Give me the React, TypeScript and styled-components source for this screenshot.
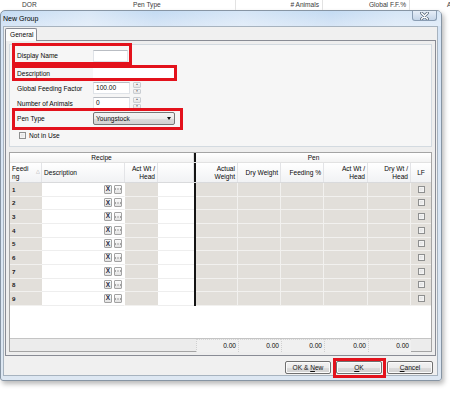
import { createGlobalStyle, styled } from "styled-components";

const FONT = `"Liberation Sans", Arial, sans-serif`;
const COLS = "32px 83px 33px 36px 2px 42px 43px 43px 44px 43px 20px";

type Align = "left" | "right" | "center";
type HeadDef = { lines: string[]; align: Align; sort?: boolean };

const recipeHeads: HeadDef[] = [
  { lines: ["Feedi", "ng"], align: "left", sort: true },
  { lines: ["Description"], align: "left" },
  { lines: ["Act Wt /", "Head"], align: "right" },
  { lines: [], align: "left" },
];

const penHeads: HeadDef[] = [
  { lines: ["Actual", "Weight"], align: "right" },
  { lines: ["Dry Weight"], align: "right" },
  { lines: ["Feeding %"], align: "right" },
  { lines: ["Act Wt /", "Head"], align: "right" },
  { lines: ["Dry Wt /", "Head"], align: "right" },
  { lines: ["LF"], align: "center" },
];

const rows = Array.from({ length: 9 }, (_, i) => i + 1);
const penCols = [0, 1, 2, 3, 4];

const flexAlign = (a: Align) =>
  a === "left" ? "flex-start" : a === "right" ? "flex-end" : "center";

export default function App() {
  return (
    <Page>
      <GlobalStyle />
      <ListHeader>
        <ListCol $pad={22}>DOR</ListCol>
        <ListCol $pad={3} $divider>
          Pen Type
        </ListCol>
        <ListCol $align="right" $divider>
          # Animals
        </ListCol>
        <ListCol $align="right" $divider>
          Global F.F.%
        </ListCol>
        <ListCol $pad={37}>A</ListCol>
      </ListHeader>

      <Dialog>
        <TitleBar>
          <Title>New Group</Title>
          <CloseButton>
            <svg width="9" height="8" viewBox="0 0 9 8">
              <path d="M1.5 1 L7.5 7 M7.5 1 L1.5 7" stroke="#5b6b7d" strokeWidth="3" strokeLinecap="round" />
              <path d="M1.5 1 L7.5 7 M7.5 1 L1.5 7" stroke="#ffffff" strokeWidth="1.5" strokeLinecap="round" />
            </svg>
          </CloseButton>
        </TitleBar>

        <Client>
          <TabStrip>
            <Tab>General</Tab>
          </TabStrip>
          <TabPanel>
            <GroupBox>
              <FormRow $top={4} $h={13}>
                <FieldLabel>Display Name</FieldLabel>
                <TextBox $w={35} />
              </FormRow>
              <FormRow $top={5} $h={12}>
                <FieldLabel>Description</FieldLabel>
                <TextBox $w={82} $plain />
              </FormRow>
              <FormRow $top={3} $h={12}>
                <FieldLabel>Global Feeding Factor</FieldLabel>
                <TextBox $w={37}>100.00</TextBox>
                <Spinner>
                  <SpinHalf>▲</SpinHalf>
                  <SpinHalf>▼</SpinHalf>
                </Spinner>
              </FormRow>
              <FormRow $top={3} $h={12}>
                <FieldLabel>Number of Animals</FieldLabel>
                <TextBox $w={37}>0</TextBox>
                <Spinner>
                  <SpinHalf>▲</SpinHalf>
                  <SpinHalf>▼</SpinHalf>
                </Spinner>
              </FormRow>
              <FormRow $top={2} $h={14}>
                <FieldLabel>Pen Type</FieldLabel>
                <Select>
                  <span>Youngstock</span>
                  <Caret />
                </Select>
              </FormRow>
              <FormRow $top={6} $h={9}>
                <CheckBox $left={2} />
                <CheckLabel>Not in Use</CheckLabel>
              </FormRow>

              <Highlight $x={2} $y={-2} $w={120} $h={22} />
              <Highlight $x={2} $y={20} $w={165} $h={16} />
              <Highlight $x={2} $y={63} $w={171} $h={22} />
            </GroupBox>

            <Table>
              <BandRow>
                <BandCell $span="1 / 5">Recipe</BandCell>
                <DividerCell />
                <BandCell $span="6 / 12" $last>
                  Pen
                </BandCell>
              </BandRow>

              <HeadRow>
                {recipeHeads.map((h, i) => (
                  <HeadCell key={`r${i}`} $align={h.align}>
                    {h.lines.map((l) => (
                      <span key={l}>{l}</span>
                    ))}
                    {h.sort && <SortMark>△</SortMark>}
                  </HeadCell>
                ))}
                <DividerCell />
                {penHeads.map((h, i) => (
                  <HeadCell key={`p${i}`} $align={h.align} $last={i === penHeads.length - 1}>
                    {h.lines.map((l) => (
                      <span key={l}>{l}</span>
                    ))}
                  </HeadCell>
                ))}
              </HeadRow>

              {rows.map((n) => (
                <DataRow key={n}>
                  <Cell $tone="gray" $noRight>
                    <RowNum>{n}</RowNum>
                  </Cell>
                  <Cell $tone="white" $align="right">
                    <MiniButton $bold>X</MiniButton>
                    <MiniButton>
                      <svg width="6" height="2" viewBox="0 0 6 2">
                        <rect x="0" y="0.5" width="1" height="1" fill="#5a5a5a" />
                        <rect x="2.5" y="0.5" width="1" height="1" fill="#5a5a5a" />
                        <rect x="5" y="0.5" width="1" height="1" fill="#5a5a5a" />
                      </svg>
                    </MiniButton>
                  </Cell>
                  <Cell $tone="gray" $noRight />
                  <Cell $tone="white" $noRight />
                  <DividerCell />
                  {penCols.map((c) => (
                    <Cell key={c} $tone="gray" />
                  ))}
                  <Cell $tone="gray" $align="center" $noRight>
                    <CheckBox />
                  </Cell>
                </DataRow>
              ))}

              <Filler />

              <FooterRow>
                <FootCell $span="1 / 6" />
                {penCols.map((c) => (
                  <TotalCell key={c}>0.00</TotalCell>
                ))}
                <FootCell />
              </FooterRow>
            </Table>
          </TabPanel>

          <ButtonBar>
            <DlgButton>
              OK &amp; <u>N</u>ew
            </DlgButton>
            <DlgButton $marked>
              <u>O</u>K
            </DlgButton>
            <DlgButton>
              <u>C</u>ancel
            </DlgButton>
          </ButtonBar>
        </Client>
      </Dialog>
    </Page>
  );
}

const GlobalStyle = createGlobalStyle`
  html, body { margin: 0; padding: 0; background: #ffffff; }
  body { font-family: ${FONT}; font-size: 6.6px; color: #0a0a0a; }
  * { box-sizing: border-box; }
`;

const Page = styled.div`
  width: 450px;
  height: 397px;
  overflow: hidden;
  background: #ffffff;
`;

const ListHeader = styled.div`
  display: grid;
  grid-template-columns: 130px 106px 87px 87px 40px;
  height: 10px;
  color: #3a3a3a;
`;

const ListCol = styled.div<{ $align?: Align; $pad?: number; $divider?: boolean }>`
  text-align: ${(p) => p.$align ?? "left"};
  padding: 0 3px 0 ${(p) => p.$pad ?? 0}px;
  line-height: 9px;
  white-space: nowrap;
  border-right: ${(p) => (p.$divider ? "1px solid #e2e2e2" : "none")};
`;

const Dialog = styled.div`
  width: 442px;
  height: 371px;
  border: 1px solid #8795a4;
  border-radius: 5px 5px 3px 3px;
  background: linear-gradient(180deg, #c4dbf3 0px, #d6e5f6 14px, #dde7f2 100%);
  box-shadow: 2px 3px 5px rgba(0, 0, 0, 0.28);
  display: flex;
  flex-direction: column;
`;

const TitleBar = styled.div`
  height: 15px;
  display: flex;
  align-items: flex-start;
  justify-content: space-between;
  padding-left: 2px;
  background: linear-gradient(
    90deg,
    rgba(255, 255, 255, 0) 0%,
    rgba(255, 255, 255, 0.35) 20%,
    rgba(255, 255, 255, 0) 35%,
    rgba(255, 255, 255, 0.3) 55%,
    rgba(255, 255, 255, 0) 75%,
    rgba(255, 255, 255, 0.3) 90%
  );
`;

const Title = styled.div`
  font-size: 7px;
  color: #000000;
  line-height: 14px;
  padding-top: 1px;
`;

const CloseButton = styled.div`
  width: 25px;
  height: 10px;
  margin-right: 4px;
  border: 1px solid #8a9db3;
  border-top: none;
  border-radius: 0 0 3px 3px;
  background: linear-gradient(180deg, #e6eef8, #c5d5e8);
  display: flex;
  align-items: center;
  justify-content: center;
`;

const Client = styled.div`
  height: 350px;
  margin: 0 3px 0 2px;
  background: #f0f0f0;
  border: 1px solid #a7b3bf;
  padding: 1px 0 0 1px;
  display: flex;
  flex-direction: column;
`;

const TabStrip = styled.div`
  display: flex;
  height: 12px;
  position: relative;
  z-index: 1;
`;

const Tab = styled.div`
  width: 32px;
  height: 13px;
  background: #fcfcfc;
  border: 1px solid #898c95;
  border-bottom: none;
  border-radius: 2px 2px 0 0;
  padding-left: 4px;
  line-height: 11px;
`;

const TabPanel = styled.div`
  width: 431px;
  height: 316px;
  border: 1px solid #898c95;
  background: #eeeeee;
  padding: 3px 3px;
  display: flex;
  flex-direction: column;
  gap: 5px;
`;

const GroupBox = styled.div`
  position: relative;
  height: 103px;
  border: 1px solid #d3dae0;
  background: #f6f6f6;
  padding-left: 7px;
`;

const FormRow = styled.div<{ $top: number; $h: number }>`
  display: flex;
  align-items: center;
  margin-top: ${(p) => p.$top}px;
  height: ${(p) => p.$h}px;
`;

const FieldLabel = styled.div`
  width: 76px;
  white-space: nowrap;
`;

const TextBox = styled.div<{ $w: number; $plain?: boolean }>`
  width: ${(p) => p.$w}px;
  height: 12px;
  background: #ffffff;
  border: 1px solid ${(p) => (p.$plain ? "#ffffff" : "#dfe3e8")};
  border-top-color: ${(p) => (p.$plain ? "#ffffff" : "#b9bdc3")};
  padding-left: 2px;
  line-height: 10px;
`;

const Spinner = styled.div`
  margin-left: 3px;
  width: 8px;
  height: 12px;
  display: flex;
  flex-direction: column;
  gap: 1px;
`;

const SpinHalf = styled.div`
  flex: 1;
  border: 1px solid #c9cdd2;
  border-radius: 1px;
  background: linear-gradient(180deg, #f8f8f8, #e4e4e4);
  font-size: 3px;
  color: #6b6b6b;
  display: flex;
  align-items: center;
  justify-content: center;
  line-height: 1;
`;

const Select = styled.div`
  width: 82px;
  height: 13px;
  border: 1px solid #767676;
  border-radius: 2px;
  background: linear-gradient(180deg, #f4f4f4 0%, #ececec 50%, #dcdcdc 51%, #d2d2d2 100%);
  display: flex;
  align-items: center;
  justify-content: space-between;
  padding: 0 3px 0 2px;
  color: #111111;
`;

const Caret = styled.div`
  width: 0;
  height: 0;
  border-left: 2.5px solid transparent;
  border-right: 2.5px solid transparent;
  border-top: 3px solid #111111;
`;

const CheckBox = styled.div<{ $left?: number }>`
  width: 7px;
  height: 7px;
  margin-left: ${(p) => p.$left ?? 0}px;
  border: 1px solid #8e8f8f;
  background: linear-gradient(135deg, #dcdcdc, #f6f6f6);
  box-shadow: inset 0 0 0 1px #f3f3f3;
`;

const CheckLabel = styled.div`
  margin-left: 3px;
`;

const Highlight = styled.div<{ $x: number; $y: number; $w: number; $h: number }>`
  position: absolute;
  left: ${(p) => p.$x}px;
  top: ${(p) => p.$y}px;
  width: ${(p) => p.$w}px;
  height: ${(p) => p.$h}px;
  border: 3px solid #e3121c;
  pointer-events: none;
`;

const Table = styled.div`
  height: 200px;
  border: 1px solid #a4a4a4;
  background: #ffffff;
  display: flex;
  flex-direction: column;
`;

const GridRow = styled.div`
  display: grid;
  grid-template-columns: ${COLS};
`;

const BandRow = styled(GridRow)`
  height: 10px;
  background: linear-gradient(180deg, #ffffff, #f3f3f3);
  border-bottom: 1px solid #e2e2e2;
`;

const BandCell = styled.div<{ $span: string; $last?: boolean }>`
  grid-column: ${(p) => p.$span};
  text-align: center;
  line-height: 9px;
  border-right: ${(p) => (p.$last ? "none" : "1px solid #e0e0e0")};
`;

const DividerCell = styled.div`
  background: #141414;
`;

const HeadRow = styled(GridRow)`
  height: 20px;
  background: linear-gradient(180deg, #ffffff, #f1f2f4);
  border-bottom: 1px solid #d9dadc;
`;

const HeadCell = styled.div<{ $align: Align; $last?: boolean }>`
  position: relative;
  display: flex;
  flex-direction: column;
  justify-content: center;
  align-items: ${(p) => flexAlign(p.$align)};
  text-align: ${(p) => p.$align};
  padding: 0 2px;
  line-height: 8px;
  white-space: nowrap;
  border-right: ${(p) => (p.$last ? "none" : "1px solid #e3e4e7")};
`;

const SortMark = styled.span`
  position: absolute;
  right: 1px;
  top: 4px;
  font-size: 5px;
  color: #9a9a9a;
`;

const DataRow = styled(GridRow)`
  height: 13.67px;
`;

const Cell = styled.div<{ $tone: "gray" | "white"; $noRight?: boolean; $align?: Align }>`
  background: ${(p) => (p.$tone === "gray" ? "#e2dfda" : "#ffffff")};
  border-bottom: 1px solid ${(p) => (p.$tone === "gray" ? "#f2f1ef" : "#eeeeee")};
  border-right: ${(p) => (p.$noRight ? "none" : `1px solid ${p.$tone === "gray" ? "#f2f1ef" : "#ffffff"}`)};
  display: flex;
  align-items: center;
  justify-content: ${(p) => flexAlign(p.$align ?? "left")};
  gap: 2px;
  padding: 0 2px;
`;

const RowNum = styled.span`
  color: #1a1a1a;
  font-weight: bold;
  font-size: 6.2px;
`;

const MiniButton = styled.div<{ $bold?: boolean }>`
  width: 8px;
  height: 9px;
  border: 1px solid #a2a2a2;
  border-radius: 1px;
  background: linear-gradient(180deg, #fbfbfb, #e2e2e2);
  display: flex;
  align-items: center;
  justify-content: center;
  font-size: 6.5px;
  font-weight: ${(p) => (p.$bold ? "bold" : "normal")};
  color: #1f2a44;
  line-height: 1;
`;

const Filler = styled.div`
  flex: 1;
  background: #ffffff;
`;

const FooterRow = styled(GridRow)`
  height: 13px;
  background: #ececec;
  border-top: 1px solid #c4c4c4;
`;

const FootCell = styled.div<{ $span?: string }>`
  grid-column: ${(p) => p.$span ?? "auto"};
`;

const TotalCell = styled.div`
  border-left: 1px dotted #cfcfcf;
  border-top: 1px dotted #d6d6d6;
  background: #f0f0f0;
  text-align: right;
  padding-right: 2px;
  line-height: 12px;
`;

const ButtonBar = styled.div`
  flex: 1;
  display: flex;
  justify-content: flex-end;
  align-items: flex-start;
  gap: 5px;
  padding: 5px 4px 0 0;
`;

const DlgButton = styled.div<{ $marked?: boolean }>`
  position: relative;
  width: 46px;
  height: 13px;
  border: 1px solid #707070;
  border-radius: 2px;
  background: linear-gradient(180deg, #f2f2f2 0%, #ebebeb 50%, #dddddd 51%, #cfcfcf 100%);
  box-shadow: inset 0 0 0 1px #fbfbfb;
  text-align: center;
  line-height: 11px;
  color: #111111;

  &::after {
    content: "";
    display: ${(p) => (p.$marked ? "block" : "none")};
    position: absolute;
    left: -4px;
    top: -4px;
    right: -5px;
    bottom: -5px;
    border: 3px solid #e3121c;
  }
`;
